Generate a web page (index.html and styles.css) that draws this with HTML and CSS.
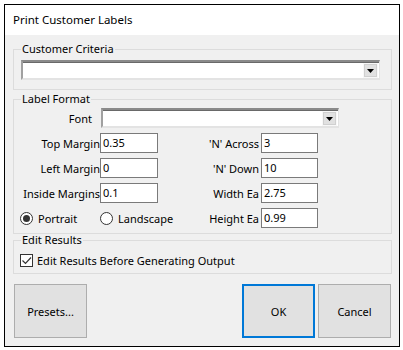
FILE: index.html
```html
<!DOCTYPE html>
<html>
<head>
  <meta charset="utf-8">
  <link rel="stylesheet" href="styles.css">
</head>
<body>
  <div class="window">
    <div class="titlebar">Print Customer Labels</div>

    <div class="dialog">
      <fieldset class="group group-criteria">
        <legend>Customer Criteria</legend>
        <div class="combo combo-criteria">
          <span class="combo-btn">
            <svg width="7" height="4" viewBox="0 0 7 4"><polygon points="0,0 7,0 3.5,4" fill="#000"/></svg>
          </span>
        </div>
      </fieldset>

      <fieldset class="group group-format">
        <legend>Label Format</legend>
        <div class="format-grid">
          <div class="field-label font-label">Font</div>
          <div class="combo combo-font">
            <span class="combo-btn">
              <svg width="7" height="4" viewBox="0 0 7 4"><polygon points="0,0 7,0 3.5,4" fill="#000"/></svg>
            </span>
          </div>

          <div class="field-label">Top Margin</div>
          <div class="textbox">0.35</div>
          <div class="field-label right-label">'N' Across</div>
          <div class="textbox">3</div>

          <div class="field-label">Left Margin</div>
          <div class="textbox">0</div>
          <div class="field-label right-label">'N' Down</div>
          <div class="textbox">10</div>

          <div class="field-label">Inside Margins</div>
          <div class="textbox">0.1</div>
          <div class="field-label right-label">Width Ea</div>
          <div class="textbox">2.75</div>

          <div class="radio-item portrait"><span class="radio checked"></span>Portrait</div>
          <div class="radio-item landscape"><span class="radio"></span>Landscape</div>
          <div class="field-label right-label">Height Ea</div>
          <div class="textbox">0.99</div>
        </div>
      </fieldset>

      <fieldset class="group group-edit">
        <legend>Edit Results</legend>
        <div class="check-row">
          <span class="checkbox">
            <svg width="11" height="11" viewBox="0 0 11 11"><polyline points="1.5,5.5 4.5,8.5 10,2.5" fill="none" stroke="#333" stroke-width="1.2"/></svg>
          </span>
          Edit Results Before Generating Output
        </div>
      </fieldset>

      <div class="buttons">
        <button class="btn">Presets...</button>
        <div class="spacer"></div>
        <button class="btn btn-default">OK</button>
        <button class="btn">Cancel</button>
      </div>
    </div>
  </div>
</body>
</html>
```

FILE: styles.css
```css
* {
  box-sizing: border-box;
}

body {
  margin: 0;
  background: #ffffff;
  font-family: "Noto Sans", "Liberation Sans", sans-serif;
  font-size: 11px;
  color: #000000;
}

.window {
  width: 396px;
  margin: 4px 0 0 4px;
  border: 1px solid #000000;
  background: #f0f0f0;
}

.titlebar {
  height: 30px;
  line-height: 30px;
  padding-left: 8px;
  font-size: 11.5px;
  background: #ffffff;
}

.dialog {
  padding: 6px 7px 8px 8px;
}

.group {
  margin: 0;
  padding: 0;
  min-width: 0;
  border: 1px solid #dcdcdc;
}

.group legend {
  margin-left: 7px;
  padding: 0 1px;
  line-height: 16px;
}

.group-criteria {
  padding: 3px 0 9px 0;
}

.group-format {
  margin-top: 1px;
  padding: 1px 0 5px 0;
}

.group-edit {
  margin-top: -2px;
  padding: 4px 0 5px 0;
}

/* combo boxes */
.combo {
  height: 20px;
  display: flex;
  justify-content: flex-end;
  background: #ffffff;
  border-top: 2px solid #8a8a8a;
  border-left: 2px solid #a0a0a0;
  border-right: 1px solid #e3e3e3;
  border-bottom: 2px solid #e3e3e3;
  box-shadow: inset 0 1px 0 #696969;
  padding: 1px 1px 0 0;
}

.combo-criteria {
  margin: 0 11px 0 7px;
}

.combo-btn {
  width: 15px;
  height: 15px;
  display: flex;
  align-items: center;
  justify-content: center;
  background: #e1e1e1;
  border: 1px solid #f8f8f8;
  outline: 1px solid #d0d0d0;
  outline-offset: -2px;
}

/* label format grid */
.format-grid {
  display: grid;
  grid-template-columns: 86px 58px 103px 57px 21px;
  grid-auto-rows: 20px;
  row-gap: 5px;
  align-items: center;
}

.field-label {
  grid-column: 1;
  text-align: right;
  white-space: nowrap;
}

.font-label {
  padding-right: 8px;
}

.right-label {
  grid-column: 3;
  padding-right: 2px;
}

.combo-font {
  grid-column: 2 / 6;
  margin-left: 1px;
}

.textbox {
  height: 20px;
  line-height: 18px;
  padding-left: 2px;
  background: #ffffff;
  border: 1px solid #7a7a7a;
}

.radio-item {
  display: flex;
  align-items: center;
  gap: 5px;
  white-space: nowrap;
}

.portrait {
  grid-column: 1;
  padding-left: 6px;
}

.landscape {
  grid-column: 2;
}

.radio {
  flex-shrink: 0;
  width: 13px;
  height: 13px;
  border: 1px solid #333333;
  border-radius: 50%;
  background: #ffffff;
  display: flex;
  align-items: center;
  justify-content: center;
}

.radio.checked::after {
  content: "";
  width: 7px;
  height: 7px;
  border-radius: 50%;
  background: #333333;
}

/* edit results */
.check-row {
  height: 16px;
  margin-left: 6px;
  display: flex;
  align-items: center;
  gap: 4px;
}

.checkbox {
  flex-shrink: 0;
  width: 13px;
  height: 13px;
  border: 1px solid #333333;
  background: #ffffff;
  display: flex;
  align-items: center;
  justify-content: center;
}

/* buttons */
.buttons {
  display: flex;
  gap: 3px;
  margin-top: 10px;
  padding-left: 1px;
  padding-right: 1px;
}

.spacer {
  flex: 1;
}

.btn {
  width: 73px;
  height: 54px;
  margin: 0;
  padding: 0;
  font-family: inherit;
  font-size: 11px;
  color: #000000;
  background: #e1e1e1;
  border: 1px solid #adadad;
}

.btn-default {
  border: 2px solid #0078d7;
}
```
